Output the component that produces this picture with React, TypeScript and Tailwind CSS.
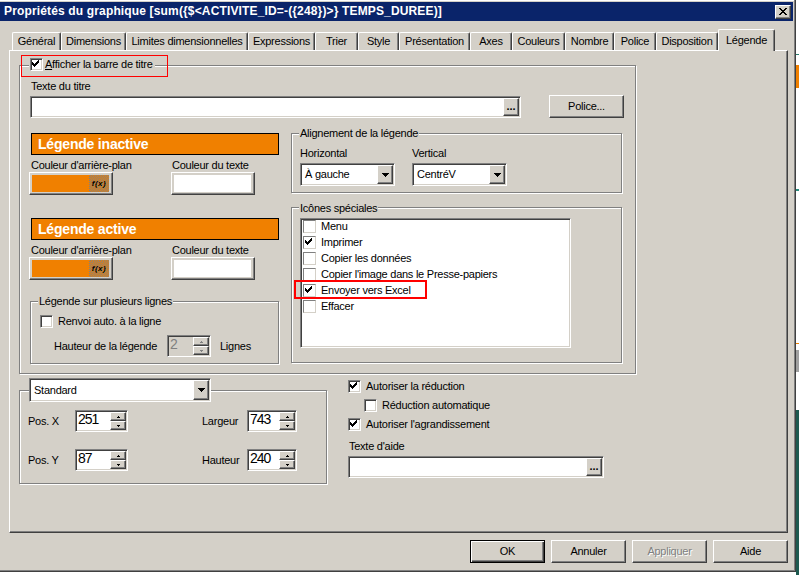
import React from 'react';

const raised =
  'border border-t-white border-l-white border-r-[#404040] border-b-[#404040] shadow-[inset_-1px_-1px_0_#808080]';
const sunken =
  'border border-t-[#808080] border-l-[#808080] border-r-white border-b-white shadow-[inset_1px_1px_0_#404040,inset_-1px_-1px_0_#d4d0c8]';
const etched = 'border border-[#808080] shadow-[1px_1px_0_#ffffff,inset_1px_1px_0_#ffffff]';

// petite coche classique 7x7
function Tick({ gray }: { gray?: boolean }) {
  const rows = [2, 3, 4, 3, 2, 1, 0];
  return (
    <svg width="11" height="11" viewBox="0 0 11 11" shapeRendering="crispEdges" className="block">
      {rows.map((r, i) => (
        <rect key={i} x={1 + i} y={1 + r} width="1" height="3" fill={gray ? '#808080' : '#000'} />
      ))}
    </svg>
  );
}

function Check({ checked, flat }: { checked?: boolean; flat?: boolean }) {
  const box = flat
    ? 'border border-t-[#808080] border-l-[#808080] border-r-[#d4d0c8] border-b-[#d4d0c8]'
    : sunken;
  return (
    <div className={`w-[13px] h-[13px] shrink-0 bg-white ${box} flex items-center justify-center`}>
      {checked && <Tick />}
    </div>
  );
}

function DownArrow({ small, gray }: { small?: boolean; gray?: boolean }) {
  const rows = small ? [3, 1] : [7, 5, 3, 1];
  const w = small ? 3 : 7;
  return (
    <svg width={w} height={rows.length} viewBox={`0 0 ${w} ${rows.length}`} shapeRendering="crispEdges" className="block">
      {rows.map((n, i) => (
        <rect key={i} x={(w - n) / 2} y={i} width={n} height="1" fill={gray ? '#808080' : '#000'} />
      ))}
    </svg>
  );
}

function UpArrow({ gray }: { gray?: boolean }) {
  return (
    <svg width="3" height="2" viewBox="0 0 3 2" shapeRendering="crispEdges" className="block">
      <rect x="1" y="0" width="1" height="1" fill={gray ? '#808080' : '#000'} />
      <rect x="0" y="1" width="3" height="1" fill={gray ? '#808080' : '#000'} />
    </svg>
  );
}

function Select({ value, className }: { value: string; className: string }) {
  return (
    <div className={`${className} shrink-0 ${sunken} bg-white flex p-[1px]`}>
      <div className="flex-1 flex items-center pl-[3px]">{value}</div>
      <div className={`w-[16px] ${raised} bg-[#d4d0c8] flex items-center justify-center`}>
        <DownArrow />
      </div>
    </div>
  );
}

function Spin({ value, className, disabled }: { value: string; className: string; disabled?: boolean }) {
  return (
    <div
      className={`${className} h-[22px] shrink-0 ${sunken} ${
        disabled ? 'bg-[#d4d0c8] text-[#808080]' : 'bg-white'
      } flex p-[1px]`}
    >
      <div className="flex-1 pl-[1px] text-[14px] leading-[15px] tracking-[-1px]">{value}</div>
      <div className="w-[16px] flex flex-col">
        <div className={`flex-1 ${raised} bg-[#d4d0c8] flex items-center justify-center`}>
          <UpArrow gray={disabled} />
        </div>
        <div className={`flex-1 ${raised} bg-[#d4d0c8] flex items-center justify-center`}>
          <DownArrow small gray={disabled} />
        </div>
      </div>
    </div>
  );
}

function TextBox({ className }: { className: string }) {
  return (
    <div className={`${className} h-[22px] shrink-0 ${sunken} bg-white flex justify-end p-[1px]`}>
      <div className={`w-[16px] h-full ${raised} bg-[#d4d0c8] flex items-end justify-center pb-[3px] text-[11px] leading-none font-bold tracking-normal`}>
        ...
      </div>
    </div>
  );
}

function ColorButton({ orange }: { orange?: boolean }) {
  return (
    <div className={`w-[84px] h-[23px] shrink-0 ${raised} bg-[#d4d0c8] pl-[2px] pr-[3px] py-[2px]`}>
      {orange ? (
        <div className="h-full bg-[#f08000] flex justify-end">
          <div className="w-[20px] h-full bg-[repeating-conic-gradient(#808080_0_25%,#f08000_0_50%)] bg-[length:2px_2px] flex items-center justify-center text-[8px] leading-none italic font-bold tracking-[0.5px]">
            f(x)
          </div>
        </div>
      ) : (
        <div className="h-full bg-white" />
      )}
    </div>
  );
}

function Bar({ label }: { label: string }) {
  return (
    <div className="h-[22px] w-full bg-[#f08000] border border-black flex items-center pl-[6px] text-white font-bold text-[14px] tracking-[-0.2px]">
      {label}
    </div>
  );
}

function Legend({ children, className }: { children: React.ReactNode; className: string }) {
  return <div className={`${className} h-[13px] px-[1px] bg-[#d4d0c8] whitespace-nowrap`}>{children}</div>;
}

const tabs = [
  { label: 'Général', w: 'w-[49px]' },
  { label: 'Dimensions', w: 'w-[65px]' },
  { label: 'Limites dimensionnelles', w: 'w-[122px]' },
  { label: 'Expressions', w: 'w-[67px]' },
  { label: 'Trier', w: 'w-[43px]' },
  { label: 'Style', w: 'w-[41px]' },
  { label: 'Présentation', w: 'w-[71px]' },
  { label: 'Axes', w: 'w-[42px]' },
  { label: 'Couleurs', w: 'w-[53px]' },
  { label: 'Nombre', w: 'w-[49px]' },
  { label: 'Police', w: 'w-[42px]' },
  { label: 'Disposition', w: 'w-[62px]' },
];

const icones: [string, boolean][] = [
  ['Menu', false],
  ['Imprimer', true],
  ['Copier les données', false],
  ["Copier l'image dans le Presse-papiers", false],
  ['Envoyer vers Excel', true],
  ['Effacer', false],
];

export default function App() {
  return (
    <div className="w-[799px] h-[575px] overflow-hidden bg-white flex items-start font-['Liberation_Sans',Arial,sans-serif] text-[11px] leading-[13px] tracking-[-0.25px] text-black">
      {/* fenêtre de dialogue */}
      <div className="-ml-[3px] -mt-[1px] w-[799px] h-[573px] shrink-0 bg-[#d4d0c8] p-[3px] flex flex-col shadow-[inset_-1px_-1px_0_#404040,inset_1px_1px_0_#d4d0c8,inset_-2px_-2px_0_#808080,inset_2px_2px_0_#ffffff]">
        {/* barre de titre */}
        <div className="h-[19px] shrink-0 bg-[#0a246a] flex items-center justify-between pl-[4px] pr-[2px]">
          <span className="text-white font-bold text-[12px] tracking-[0.15px] whitespace-nowrap">
            {'Propriétés du graphique [sum({$<ACTIVITE_ID=-({248})>} TEMPS_DUREE)]'}
          </span>
          <div className={`w-[16px] h-[14px] ${raised} bg-[#d4d0c8] flex items-center justify-center`}>
            <svg width="8" height="7" viewBox="0 0 8 7" shapeRendering="crispEdges" className="block">
              {[0, 1, 2, 3, 4, 5, 6].map((r) => (
                <g key={r}>
                  <rect x={r} y={r} width="2" height="1" fill="#000" />
                  <rect x={6 - r} y={r} width="2" height="1" fill="#000" />
                </g>
              ))}
            </svg>
          </div>
        </div>

        {/* onglets */}
        <div className="mt-[8px] h-[21px] shrink-0 flex items-end pl-[12px]">
          {tabs.map((t) => (
            <div
              key={t.label}
              className={`${t.w} h-[18px] shrink-0 flex items-center justify-center whitespace-nowrap border-t border-l border-r border-t-white border-l-white border-r-[#404040] shadow-[inset_-1px_0_0_#808080] rounded-t-[2px]`}
            >
              {t.label}
            </div>
          ))}
          <div className="w-[57px] h-[22px] -mb-[1px] relative z-10 shrink-0 bg-[#d4d0c8] flex items-center justify-center pb-[1px] border-t border-l border-r border-t-white border-l-white border-r-[#404040] shadow-[inset_-1px_0_0_#808080] rounded-t-[2px]">
            Légende
          </div>
        </div>

        {/* panneau */}
        <div className={`ml-[9px] w-[779px] h-[483px] shrink-0 ${raised} bg-[#d4d0c8] flex flex-col items-start`}>
          {/* groupe principal */}
          <div className={`ml-[9px] mt-[14px] w-[617px] h-[309px] shrink-0 ${etched} relative flex flex-col items-start`}>
            <div className="absolute left-[1px] top-[-11px] w-[147px] h-[22px] border border-[#ff0000]" />
            <div className="-mt-[8px] ml-[9px] h-[13px] flex items-center gap-[2px] bg-[#d4d0c8] pl-[1px] pr-[2px] relative">
              <Check checked />
              <span className="whitespace-nowrap">
                <u>A</u>fficher la barre de titre
              </span>
            </div>
            <div className="mt-[9px] ml-[11px] h-[13px]">Texte du titre</div>
            <div className="mt-[2px] ml-[10px] h-[23px] flex items-end">
              <TextBox className="w-[491px]" />
              <div className={`ml-[28px] w-[75px] h-[23px] ${raised} bg-[#d4d0c8] flex items-center justify-center`}>
                Police...
              </div>
            </div>

            <div className="mt-[15px] flex items-start">
              {/* colonne gauche */}
              <div className="ml-[11px] w-[248px] flex flex-col items-start">
                <Bar label="Légende inactive" />
                <div className="mt-[4px] h-[13px] flex">
                  <span className="w-[141px] whitespace-nowrap">Couleur d'arrière-plan</span>
                  <span className="whitespace-nowrap">Couleur du texte</span>
                </div>
                <div className="flex -ml-[2px]">
                  <ColorButton orange />
                  <div className="ml-[58px]">
                    <ColorButton />
                  </div>
                </div>
                <div className="mt-[23px] w-full">
                  <Bar label="Légende active" />
                </div>
                <div className="mt-[4px] h-[13px] flex">
                  <span className="w-[141px] whitespace-nowrap">Couleur d'arrière-plan</span>
                  <span className="whitespace-nowrap">Couleur du texte</span>
                </div>
                <div className="flex -ml-[2px]">
                  <ColorButton orange />
                  <div className="ml-[58px]">
                    <ColorButton />
                  </div>
                </div>

                <div className={`mt-[21px] -ml-[1px] w-[249px] h-[63px] ${etched} flex flex-col items-start`}>
                  <Legend className="-mt-[7px] ml-[7px]">Légende sur plusieurs lignes</Legend>
                  <div className="mt-[7px] ml-[9px] flex items-center gap-[5px]">
                    <Check />
                    <span className="whitespace-nowrap">Renvoi auto. à la ligne</span>
                  </div>
                  <div className="mt-[7px] ml-[23px] flex items-center">
                    <span className="w-[113px] whitespace-nowrap">Hauteur de la légende</span>
                    <Spin value="2" className="w-[44px]" disabled />
                    <span className="ml-[9px]">Lignes</span>
                  </div>
                </div>
              </div>

              {/* colonne droite */}
              <div className="ml-[12px] w-[331px] flex flex-col">
                <div className={`h-[60px] ${etched} flex flex-col items-start`}>
                  <Legend className="-mt-[7px] ml-[7px]">Alignement de la légende</Legend>
                  <div className="mt-[7px] ml-[8px] h-[13px] flex">
                    <span className="w-[112px]">Horizontal</span>
                    <span>Vertical</span>
                  </div>
                  <div className="mt-[3px] ml-[8px] flex">
                    <Select value="À gauche" className="w-[95px] h-[23px]" />
                    <div className="ml-[17px]">
                      <Select value="CentréV" className="w-[95px] h-[23px]" />
                    </div>
                  </div>
                </div>

                <div className={`mt-[14px] h-[156px] ${etched} relative flex flex-col items-start`}>
                  <div className="absolute left-[2px] top-[72px] w-[133px] h-[19px] border-2 border-[#ff0000] z-10" />
                  <Legend className="-mt-[6px] ml-[7px]">Icônes spéciales</Legend>
                  <div className={`mt-[3px] ml-[8px] w-[271px] h-[130px] ${sunken} bg-white pt-[1px] pl-[2px] flex flex-col overflow-hidden`}>
                    {icones.map(([label, on]) => (
                      <div key={label} className="h-[16px] shrink-0 flex items-start gap-[5px]">
                        <Check checked={on} flat />
                        <span className="whitespace-nowrap">{label}</span>
                      </div>
                    ))}
                  </div>
                </div>
              </div>
            </div>
          </div>

          {/* zone inférieure */}
          <div className="flex items-start">
            <div className={`ml-[9px] mt-[16px] w-[308px] h-[94px] ${etched} flex flex-col items-start`}>
              <div className="-mt-[13px] ml-[9px]">
                <Select value="Standard" className="w-[182px] h-[24px]" />
              </div>
              <div className="mt-[8px] ml-[8px] flex items-center">
                <span className="w-[47px]">Pos. X</span>
                <Spin value="251" className="w-[53px]" />
                <span className="ml-[74px] w-[45px]">Largeur</span>
                <Spin value="743" className="w-[50px]" />
              </div>
              <div className="mt-[17px] ml-[8px] flex items-center">
                <span className="w-[47px]">Pos. Y</span>
                <Spin value="87" className="w-[53px]" />
                <span className="ml-[74px] w-[45px]">Hauteur</span>
                <Spin value="240" className="w-[50px]" />
              </div>
            </div>

            <div className="ml-[21px] mt-[6px] flex flex-col items-start">
              <div className="flex items-center gap-[5px]">
                <Check checked />
                <span className="whitespace-nowrap">Autoriser la réduction</span>
              </div>
              <div className="mt-[6px] ml-[16px] flex items-center gap-[5px]">
                <Check />
                <span className="whitespace-nowrap">Réduction automatique</span>
              </div>
              <div className="mt-[6px] flex items-center gap-[5px]">
                <Check checked />
                <span className="whitespace-nowrap">Autoriser l'agrandissement</span>
              </div>
              <div className="mt-[9px] ml-[1px] h-[13px]">Texte d'aide</div>
              <div className="mt-[3px]">
                <TextBox className="w-[256px]" />
              </div>
            </div>
          </div>
        </div>

        {/* boutons */}
        <div className="mt-[7px] flex justify-end gap-[6px] pr-[5px]">
          <div className="w-[75px] h-[23px] border border-black bg-[#d4d0c8] shadow-[inset_1px_1px_0_#ffffff,inset_-1px_-1px_0_#404040,inset_-2px_-2px_0_#808080] flex items-center justify-center">
            OK
          </div>
          <div className={`w-[75px] h-[23px] ${raised} bg-[#d4d0c8] flex items-center justify-center`}>Annuler</div>
          <div className={`w-[75px] h-[23px] ${raised} bg-[#d4d0c8] flex items-center justify-center text-[#808080] [text-shadow:1px_1px_0_#ffffff]`}>
            Appliquer
          </div>
          <div className={`w-[75px] h-[23px] ${raised} bg-[#d4d0c8] flex items-center justify-center`}>Aide</div>
        </div>
      </div>

      {/* bord de l'application derrière */}
      <div className="w-[3px] h-[575px] shrink-0 flex flex-col">
        <div className="h-[54px]" />
        <div className="h-[1px] bg-[#2a7d6e]" />
        <div className="h-[10px]" />
        <div className="h-[23px] bg-[#f08000]" />
        <div className="h-[101px]" />
        <div className="h-[2px] bg-[#2a8d7e]" />
        <div className="h-[152px]" />
        <div className="h-[1px] bg-[#f08000]" />
        <div className="h-[6px]" />
        <div className="h-[22px] bg-[#a0a0a0]" />
        <div className="h-[38px]" />
        <div className="h-[165px] bg-[#1e5a50]" />
      </div>
    </div>
  );
}
